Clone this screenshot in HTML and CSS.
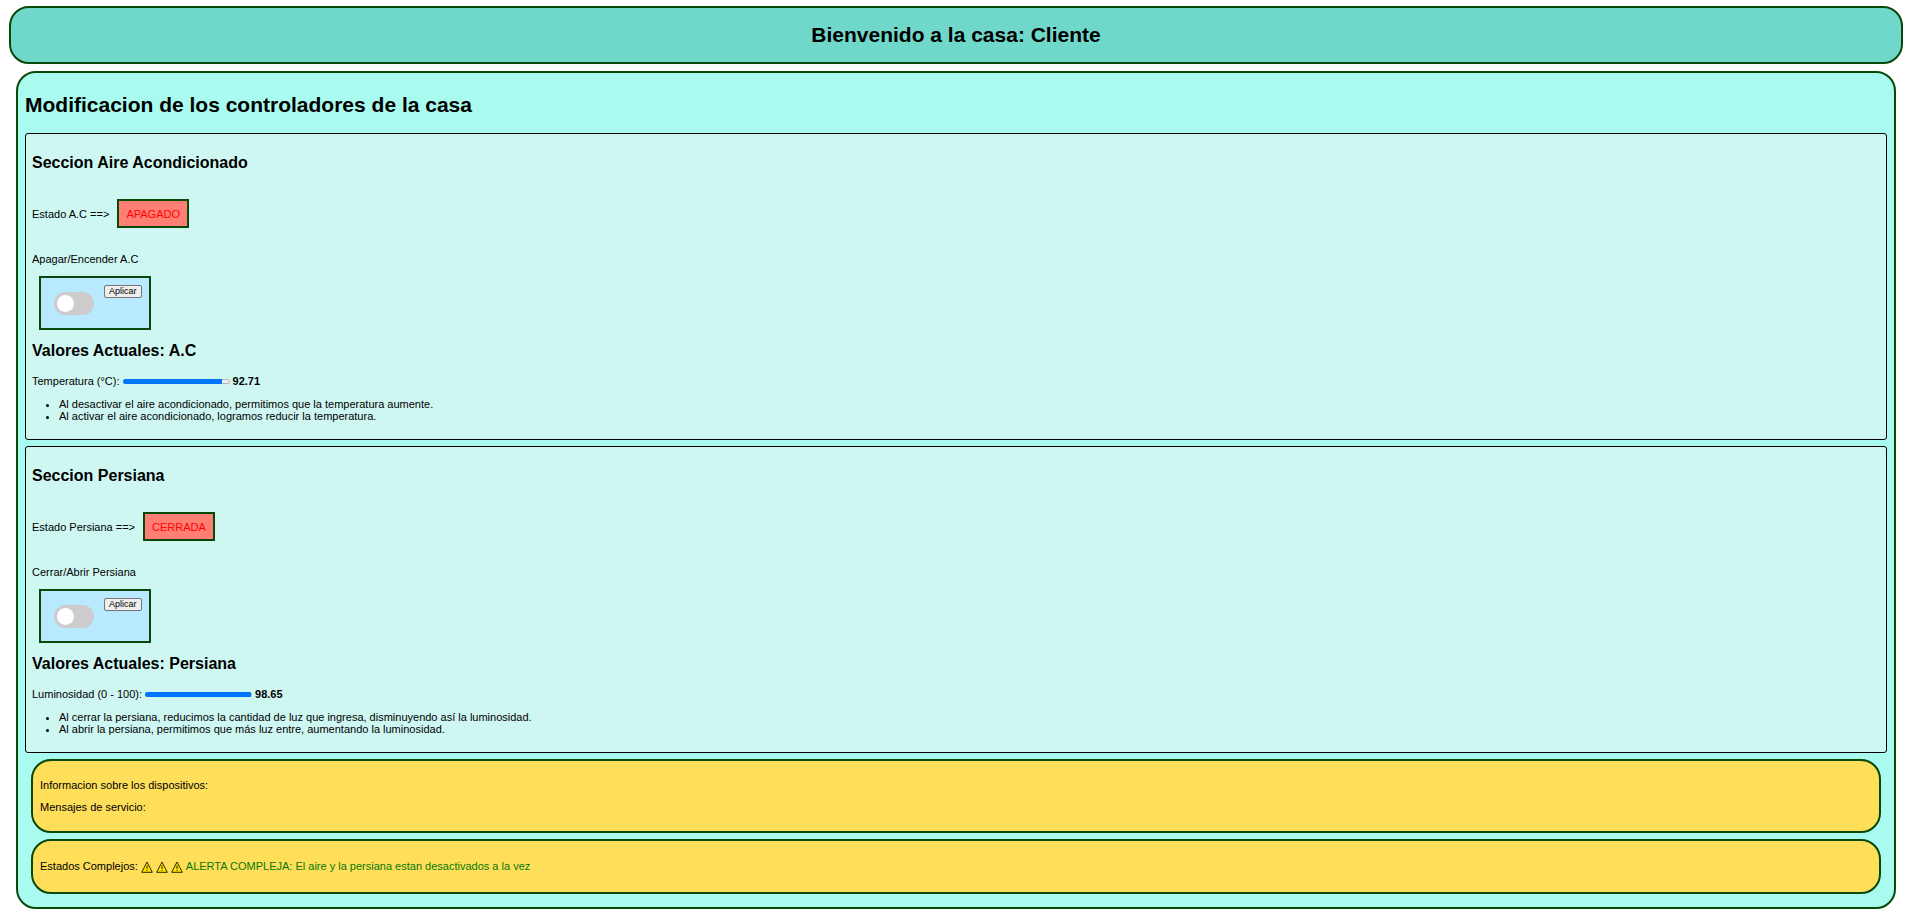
FILE: index.html
```html
<!DOCTYPE html>
<html lang="es">
<head>
<meta charset="utf-8">
<title>Bienvenido a la casa: Cliente</title>
<link rel="stylesheet" href="styles.css">
</head>
<body>
<svg class="sprite" aria-hidden="true">
  <symbol id="warning" viewBox="0 0 12 12">
    <path d="M6 1 L11.3 11.3 H0.7 Z" fill="#ffe600" stroke="#2b2b00" stroke-width="1" stroke-linejoin="round"/>
    <path d="M6 4.5 V8 M6 9 V10" stroke="#222200" stroke-width="1"/>
  </symbol>
</svg>
<header class="banner">
  <h1 class="title">Bienvenido a la casa: Cliente</h1>
</header>
<main class="house">
  <h1 class="title">Modificacion de los controladores de la casa</h1>

  <section class="panel">
    <h2 class="subtitle">Seccion Aire Acondicionado</h2>
    <div class="status">Estado A.C ==&gt; <span class="badge">APAGADO</span></div>
    <label class="caption" for="ac">Apagar/Encender A.C</label>
    <form class="control">
      <input class="switch" type="checkbox" id="ac">
      <button class="apply" type="button">Aplicar</button>
    </form>
    <h2 class="subtitle">Valores Actuales: A.C</h2>
    <div class="reading">
      <label for="temp">Temperatura (°C):</label>
      <progress class="bar" id="temp" value="92.71" max="100"></progress>
      <strong>92.71</strong>
    </div>
    <ul class="notes">
      <li>Al desactivar el aire acondicionado, permitimos que la temperatura aumente.</li>
      <li>Al activar el aire acondicionado, logramos reducir la temperatura.</li>
    </ul>
  </section>

  <section class="panel">
    <h2 class="subtitle">Seccion Persiana</h2>
    <div class="status">Estado Persiana ==&gt; <span class="badge">CERRADA</span></div>
    <label class="caption" for="blind">Cerrar/Abrir Persiana</label>
    <form class="control">
      <input class="switch" type="checkbox" id="blind">
      <button class="apply" type="button">Aplicar</button>
    </form>
    <h2 class="subtitle">Valores Actuales: Persiana</h2>
    <div class="reading">
      <label for="light">Luminosidad (0 - 100):</label>
      <progress class="bar" id="light" value="98.65" max="100"></progress>
      <strong>98.65</strong>
    </div>
    <ul class="notes">
      <li>Al cerrar la persiana, reducimos la cantidad de luz que ingresa, disminuyendo así la luminosidad.</li>
      <li>Al abrir la persiana, permitimos que más luz entre, aumentando la luminosidad.</li>
    </ul>
  </section>

  <section class="notice">
    <p>Informacion sobre los dispositivos:</p>
    <p>Mensajes de servicio:</p>
  </section>
  <section class="notice">
    <p class="alert-line">Estados Complejos:
      <span class="alert">
        <svg class="icon"><use href="#warning"/></svg>
        <svg class="icon"><use href="#warning"/></svg>
        <svg class="icon"><use href="#warning"/></svg>
        <span>ALERTA COMPLEJA: El aire y la persiana estan desactivados a la vez</span>
      </span>
    </p>
  </section>
</main>
</body>
</html>
```
FILE: styles.css
```css
* {
  box-sizing: border-box;
}

body {
  margin: 6px 4px 6px 9px;
  background: #fff;
  color: #000;
  font: 11px/12px "Liberation Sans", Arial, sans-serif;
}

.sprite {
  display: none;
}

.banner {
  padding: 15px;
  border: 2px solid #084808;
  border-radius: 20px;
  background: #70d8ca;
  text-align: center;
}

.title {
  margin: 0;
  font-size: 21px;
  line-height: 24px;
}

.house {
  display: flex;
  flex-direction: column;
  gap: 6px;
  margin: 7px;
  padding: 20px 7px 13px;
  border: 2px solid #084808;
  border-radius: 20px;
  background: #a8fbee;
}

.house > .title {
  margin-bottom: 10px;
}

.panel {
  padding: 20px 6px 17px;
  border: 1px solid #000;
  border-radius: 3px;
  background: #cff7f2;
}

.subtitle {
  margin: 0;
  font-size: 16px;
  line-height: 18px;
}

.status {
  display: flex;
  align-items: center;
  gap: 8px;
  margin: 27px 0 25px;
}

.badge {
  padding: 7px 7px 6px;
  border: 2px solid #084808;
  background: #ff7f74;
  color: #f00;
}

.caption {
  display: block;
}

.control {
  display: flex;
  align-items: flex-start;
  gap: 10px;
  width: max-content;
  margin: 11px 7px 12px;
  padding: 7px 7px 13px 13px;
  border: 2px solid #084808;
  background: #b9e9ff;
}

.switch {
  display: flex;
  align-items: center;
  appearance: none;
  width: 40px;
  height: 23px;
  margin: 7px 0 0;
  padding: 3px;
  border-radius: 12px;
  background: #ccc;
}

.switch::before {
  content: "";
  width: 17px;
  height: 17px;
  border-radius: 50%;
  background: #fff;
}

.switch:checked {
  background: #2196f3;
}

.switch:checked::before {
  margin-left: auto;
}

.apply {
  height: 13px;
  padding: 0 4px;
  border: 1px solid #767676;
  border-radius: 2px;
  background: #efefef;
  color: #000;
  font: 9px/11px "Liberation Sans", Arial, sans-serif;
}

.reading {
  display: flex;
  align-items: center;
  gap: 3px;
  margin: 15px 0 11px;
}

.bar {
  appearance: none;
  width: 107px;
  height: 5px;
  overflow: hidden;
  border: 0;
  border-radius: 3px;
  background: #efefef;
  box-shadow: inset 0 0 0 1px #b8b8b8;
}

.bar::-webkit-progress-bar {
  background: transparent;
}

.bar::-webkit-progress-value {
  background: #0075ff;
}

.notes {
  margin: 0;
  padding-left: 27px;
}

.notice {
  display: flex;
  flex-direction: column;
  gap: 10px;
  margin: 0 6px;
  padding: 18px 7px;
  border: 2px solid #084808;
  border-radius: 20px;
  background: #ffdf5a;
}

.notice p {
  margin: 0;
}

.alert-line,
.alert {
  display: flex;
  align-items: center;
  gap: 3px;
}

.alert-line {
  line-height: 15px;
}

.alert {
  color: #087808;
}

.icon {
  width: 12px;
  height: 12px;
}
```
